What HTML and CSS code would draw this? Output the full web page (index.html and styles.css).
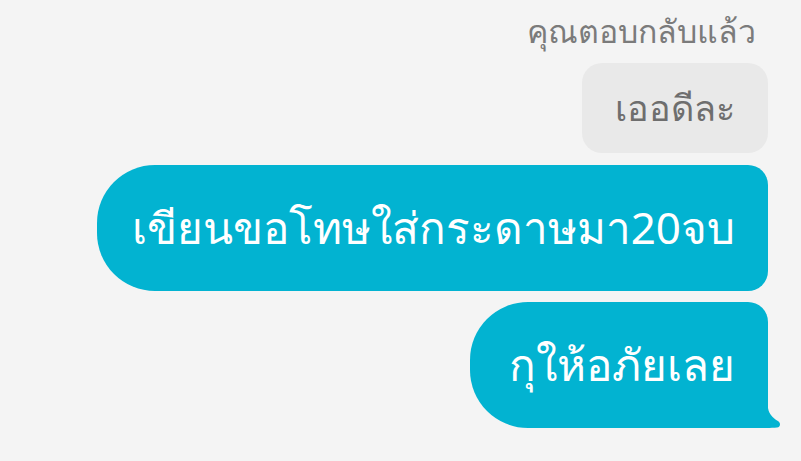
FILE: index.html
```html
<!DOCTYPE html>
<html lang="th">
<head>
<meta charset="utf-8">
<link rel="stylesheet" href="styles.css">
</head>
<body>
<div class="chat">
  <div class="reply-label">คุณตอบกลับแล้ว</div>
  <div class="bubble quoted">เออดีละ</div>
  <div class="bubble mine first">เขียนขอโทษใส่กระดาษมา20จบ</div>
  <div class="bubble mine last">กุให้อภัยเลย<svg class="tail" width="14" height="20" viewBox="0 0 14 20"><path d="M0 0 H1 C2 6 6 10 10 12.5 C14 14 14 19 10 19.6 C7 20 3 20 0 20 Z" fill="#02b3d1"/></svg></div>
</div>
</body>
</html>
```
FILE: styles.css
```css
html, body {
  margin: 0;
  padding: 0;
  background: #f4f4f4;
  width: 801px;
  height: 461px;
  overflow: hidden;
}
.chat {
  display: flex;
  flex-direction: column;
  align-items: flex-end;
  padding: 10px 33px 0 0;
  font-family: "Noto Sans", "DejaVu Sans", sans-serif;
}
.reply-label {
  color: #7b7b7b;
  font-size: 32px;
  line-height: 42px;
  margin-right: 12px;
  margin-bottom: 11px;
}
.bubble {
  box-sizing: border-box;
  display: flex;
  align-items: center;
  position: relative;
}
.quoted {
  background: #e9e9e9;
  color: #6e6e6e;
  height: 90px;
  padding: 0 33px;
  border-radius: 20px;
  font-size: 36px;
  margin-bottom: 12px;
}
.mine {
  background: #02b3d1;
  color: #ffffff;
  height: 126px;
  padding: 0 33px 0 35px;
  font-size: 44px;
  border-radius: 58px 20px 20px 58px;
}
.first {
  margin-bottom: 11px;
}
.last {
  padding-left: 39px;
  border-bottom-right-radius: 0;
}
.tail {
  position: absolute;
  right: -13px;
  bottom: 0;
}
```
